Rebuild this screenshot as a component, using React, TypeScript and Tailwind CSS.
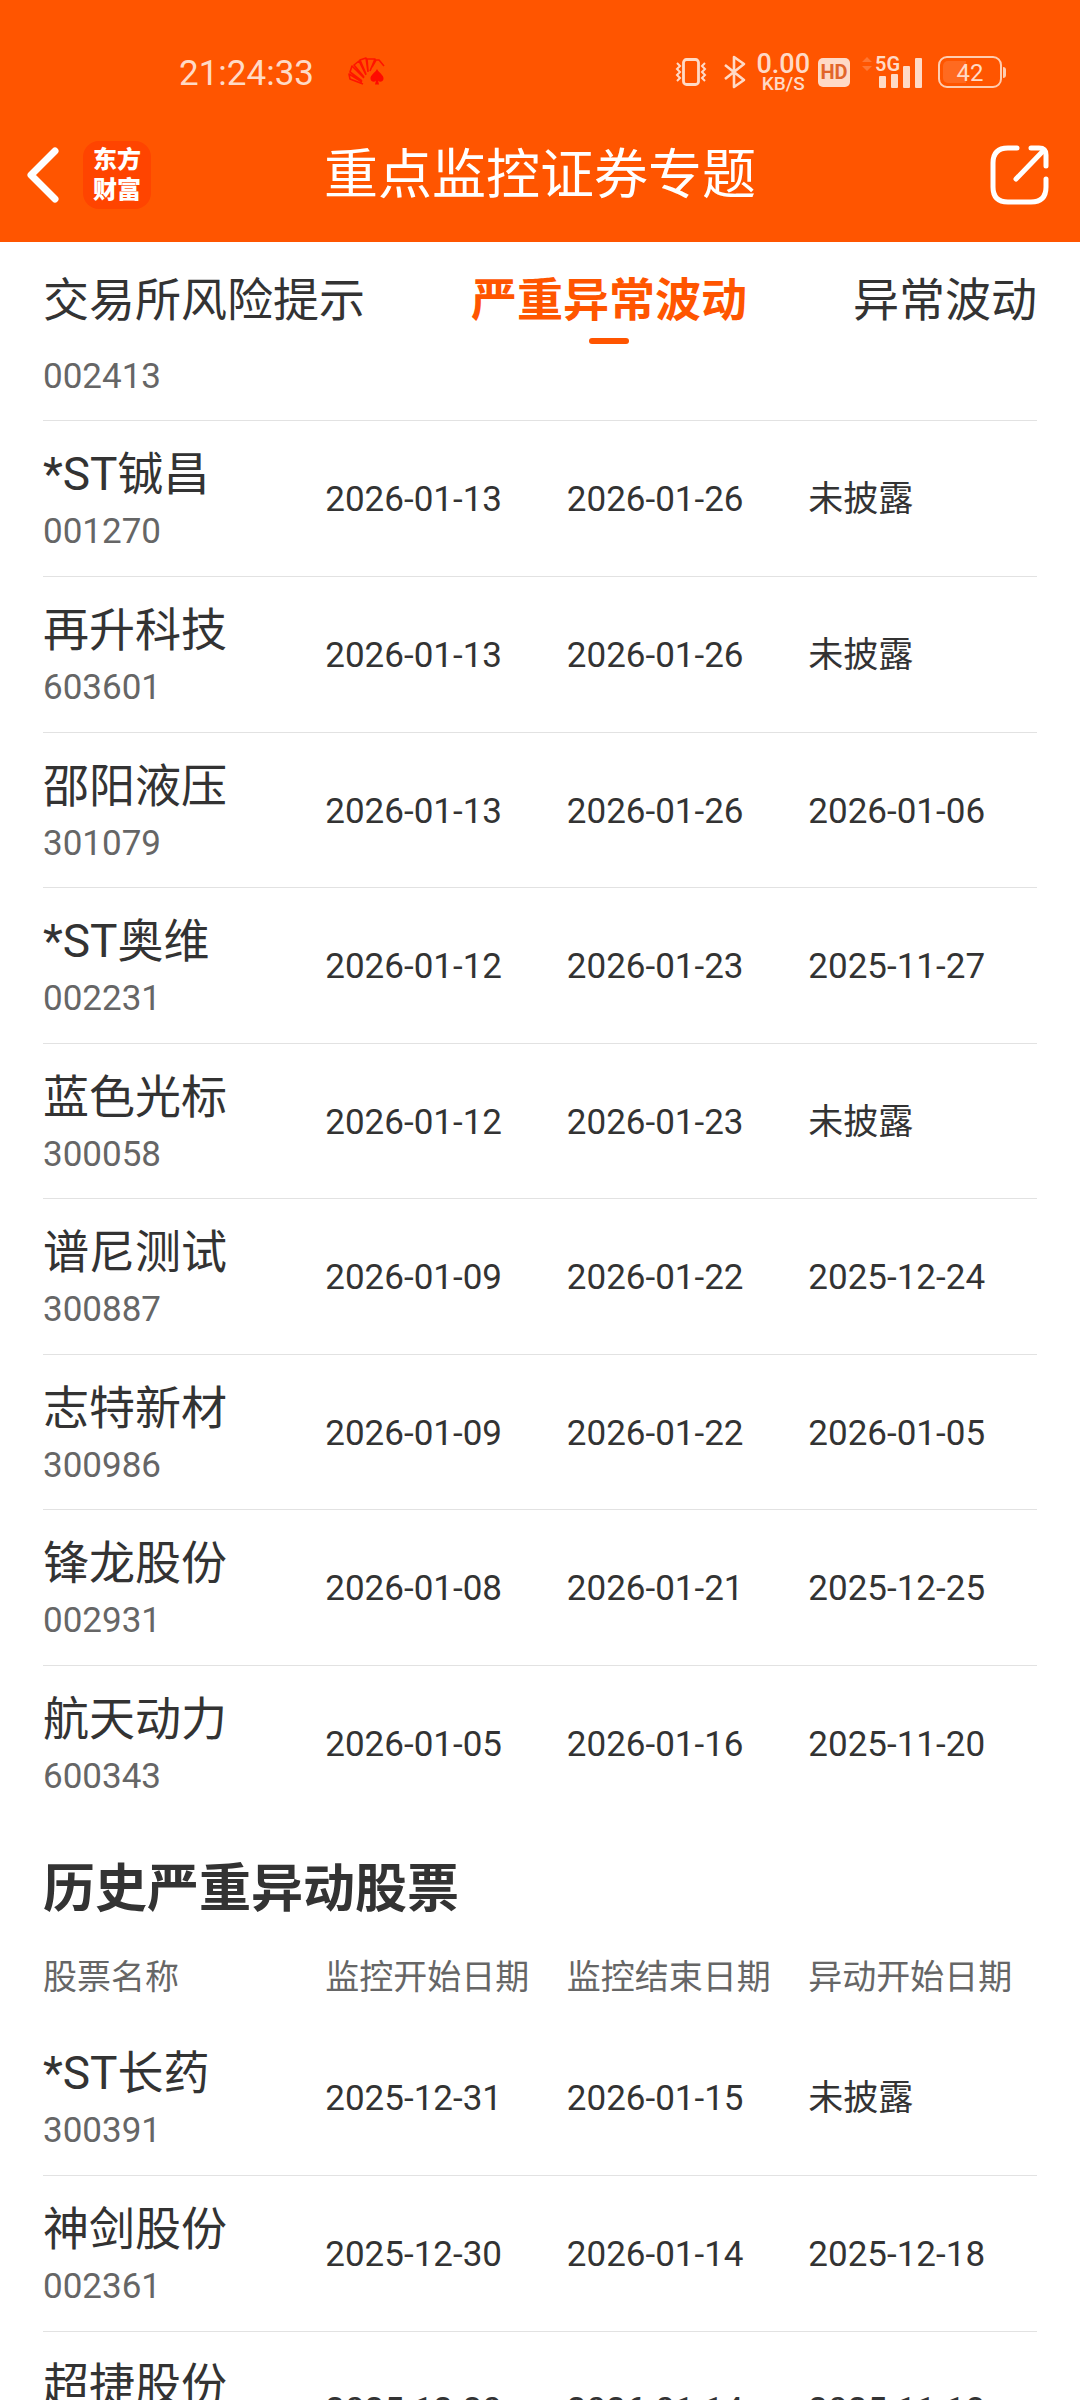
type Stock = {
  name: string
  code: string
  start: string
  end: string
  changed: string
}

const monitoring: Stock[] = [
  { name: '*ST铖昌', code: '001270', start: '2026-01-13', end: '2026-01-26', changed: '未披露' },
  { name: '再升科技', code: '603601', start: '2026-01-13', end: '2026-01-26', changed: '未披露' },
  { name: '邵阳液压', code: '301079', start: '2026-01-13', end: '2026-01-26', changed: '2026-01-06' },
  { name: '*ST奥维', code: '002231', start: '2026-01-12', end: '2026-01-23', changed: '2025-11-27' },
  { name: '蓝色光标', code: '300058', start: '2026-01-12', end: '2026-01-23', changed: '未披露' },
  { name: '谱尼测试', code: '300887', start: '2026-01-09', end: '2026-01-22', changed: '2025-12-24' },
  { name: '志特新材', code: '300986', start: '2026-01-09', end: '2026-01-22', changed: '2026-01-05' },
  { name: '锋龙股份', code: '002931', start: '2026-01-08', end: '2026-01-21', changed: '2025-12-25' },
  { name: '航天动力', code: '600343', start: '2026-01-05', end: '2026-01-16', changed: '2025-11-20' },
]

const history: Stock[] = [
  { name: '*ST长药', code: '300391', start: '2025-12-31', end: '2026-01-15', changed: '未披露' },
  { name: '神剑股份', code: '002361', start: '2025-12-30', end: '2026-01-14', changed: '2025-12-18' },
  { name: '超捷股份', code: '301005', start: '2025-12-30', end: '2026-01-14', changed: '2025-11-18' },
]

const tabs = [
  { label: '交易所风险提示', active: false },
  { label: '严重异常波动', active: true },
  { label: '异常波动', active: false },
]

function StatusBar() {
  return (
    <div className="flex h-[106px] items-center justify-between pt-[38px] pr-[74px] pl-[179px] text-[#ffdac6]">
      <div className="flex items-center gap-[34px]">
        <span className="pt-[3px] text-[35px] leading-none">21:24:33</span>
        <svg width="38" height="30" viewBox="0 0 38 30" fill="none" stroke="#ff1400" strokeWidth="1.6" strokeLinejoin="round">
          <path d="M15 27 2 22 1 17 14 25M14 24 2 15 4 9 16 21M16 20 6 8 11 4 18 18M18 17 12 3 18 1 20 15M20 14 19 2 27 2 22 14M24 10 28 3 31 3 36 9" />
          <path d="M29 12c2 4 7 6 6.500 10-.5 3-4 3.500-5.500 1.500l1 4h-4l1-4c-1.500 2-5 1.500-5.500-1.500-.5-4 4.500-6 6.500-10z" fill="#ff0a00" stroke="none" />
        </svg>
      </div>

      <div className="flex items-center">
        {/* 振动 */}
        <svg width="32" height="30" viewBox="0 0 32 30" fill="none" stroke="currentColor" strokeWidth="2.800">
          <rect x="8.500" y="2.500" width="15" height="25" rx="3" />
          <path d="m2 6 3 3-3 3 3 3-3 3 3 3-3 3M30 6l-3 3 3 3-3 3 3 3-3 3 3 3" strokeWidth="2" />
        </svg>
        {/* 蓝牙 */}
        <svg className="ml-[16px]" width="24" height="34" viewBox="0 0 24 34" fill="none" stroke="currentColor" strokeWidth="2.600">
          <path d="m2 10 19 15-10 7V2l10 7L2 24" strokeLinejoin="round" />
        </svg>
        <div className="ml-[9px] flex flex-col items-center pt-[2px] font-medium">
          <span className="text-[27px] leading-[21px]">0.00</span>
          <span className="text-[19px] leading-[17px]">KB/S</span>
        </div>
        <div className="ml-[8px] flex h-[29px] w-[32px] items-center justify-center rounded-[5px] bg-[#ffdac6] text-[20px] leading-none font-bold text-[#e2652a]">
          HD
        </div>
        {/* 信号 */}
        <svg className="ml-[12px] overflow-visible" width="61" height="34" viewBox="0 0 61 34" fill="currentColor">
          <path d="m5 2 5 5H0zM5 16l5-5H0z" fill="#ff7733" />
          <text x="13" y="16" fontSize="20" fontWeight="600" fontFamily="Roboto">5G</text>
          <rect x="17" y="21" width="7" height="12" rx="1" />
          <rect x="29" y="19" width="7" height="14" rx="1" />
          <rect x="41" y="11" width="7" height="22" rx="1" />
          <rect x="53" y="3" width="7" height="30" rx="1" />
        </svg>
        {/* 电量 */}
        <div className="ml-[15px] flex items-center gap-px">
          <div className="flex h-[32px] w-[64px] items-center rounded-[9px] border-2 border-[#ffcdb0] p-[3px]">
            <div className="flex h-full w-full items-center justify-center rounded-[5px] bg-linear-to-r from-[#ff6a20] from-42% to-transparent to-42% pt-[2px] text-[24px] leading-none">
              42
            </div>
          </div>
          <div className="h-[11px] w-[3px] rounded-r-sm bg-[#ffcdb0]" />
        </div>
      </div>
    </div>
  )
}

function NavBar() {
  return (
    <div className="flex h-[136px] items-center justify-between px-[27px] pt-[2px] text-white">
      <div className="flex flex-1 items-center gap-[22px]">
        <button type="button" aria-label="返回">
          <svg width="34" height="60" viewBox="0 0 34 60" fill="none" stroke="currentColor" strokeWidth="7" strokeLinecap="round" strokeLinejoin="round">
            <path d="M28 6 4 30l24 24" />
          </svg>
        </button>
        <div className="flex h-[68px] w-[68px] flex-col items-center justify-center rounded-[16px] bg-[#ff4400] text-[24px] leading-[30px] font-black">
          <span>东方</span>
          <span>财富</span>
        </div>
      </div>
      <h1 className="pt-[2px] text-[54px] leading-[80px]">重点监控证券专题</h1>
      <div className="flex flex-1 justify-end">
        <button type="button" aria-label="分享">
          <svg width="64" height="62" viewBox="0 0 64 62" fill="none" stroke="currentColor" strokeWidth="5" strokeLinecap="round" strokeLinejoin="round">
            <path d="M28 4H19Q4 4 4 19v24q0 15 15 15h23q15 0 15-15V35" />
            <path d="M42 4h8q7 0 7 7v11" />
            <path d="M27 35 55 6" />
          </svg>
        </button>
      </div>
    </div>
  )
}

function TabBar() {
  return (
    <nav className="flex h-[114px] shrink-0 items-start justify-between bg-white px-[43px] pt-[24px]">
      {tabs.map((tab) => (
        <button
          key={tab.label}
          type="button"
          className={`flex flex-col items-center text-[46px] leading-[68px] ${
            tab.active ? 'font-bold text-[#ff5500]' : 'text-[#333333]'
          }`}
        >
          {tab.label}
          {tab.active && <span className="mt-1 h-[6px] w-[40px] rounded-full bg-[#ff5500]" />}
        </button>
      ))}
    </nav>
  )
}

function Columns() {
  return (
    <colgroup>
      <col className="w-[28.400%]" />
      <col className="w-[24.300%]" />
      <col className="w-[24.300%]" />
      <col />
    </colgroup>
  )
}

function StockRow({ stock }: { stock: Stock }) {
  return (
    <tr className="h-[155px] border-b border-[#e2e2e2] last:border-b-0 even:h-[156px]">
      <td className="pt-1">
        <span className="block text-[46px] leading-[64px]">{stock.name}</span>
        <span className="block text-[35px] leading-[52px] text-[#666666]">{stock.code}</span>
      </td>
      <td className="pt-1">{stock.start}</td>
      <td className="pt-1">{stock.end}</td>
      <td className="pt-1">{stock.changed}</td>
    </tr>
  )
}

export default function App() {
  return (
    <div className="flex h-screen flex-col overflow-hidden bg-white font-[Roboto,'Noto_Sans_CJK_SC',sans-serif] text-[#333333]">
      <header className="shrink-0 bg-[#ff5500]">
        <StatusBar />
        <NavBar />
      </header>
      <TabBar />

      <main className="min-h-0 flex-1 overflow-hidden px-[43px]">
        {/* 滚动到一半的首行，只露出代码 */}
        <div className="h-[65px] border-b border-[#e2e2e2] text-[35px] leading-[41px] text-[#666666]">002413</div>
        <table className="w-full table-fixed border-collapse text-left text-[35px] leading-[50px]">
          <Columns />
          <tbody>
            {monitoring.map((stock) => (
              <StockRow key={stock.code} stock={stock} />
            ))}
          </tbody>
        </table>

        <h2 className="pt-[34px] text-[52px] leading-[72px] font-bold">历史严重异动股票</h2>
        <table className="w-full table-fixed border-collapse text-left text-[35px] leading-[50px]">
          <Columns />
          <thead>
            <tr className="h-[94px] text-[34px] text-[#666666]">
              <th className="pt-2 font-normal">股票名称</th>
              <th className="pt-2 font-normal">监控开始日期</th>
              <th className="pt-2 font-normal">监控结束日期</th>
              <th className="pt-2 font-normal">异动开始日期</th>
            </tr>
          </thead>
          <tbody>
            {history.map((stock) => (
              <StockRow key={stock.code} stock={stock} />
            ))}
          </tbody>
        </table>
      </main>
    </div>
  )
}
